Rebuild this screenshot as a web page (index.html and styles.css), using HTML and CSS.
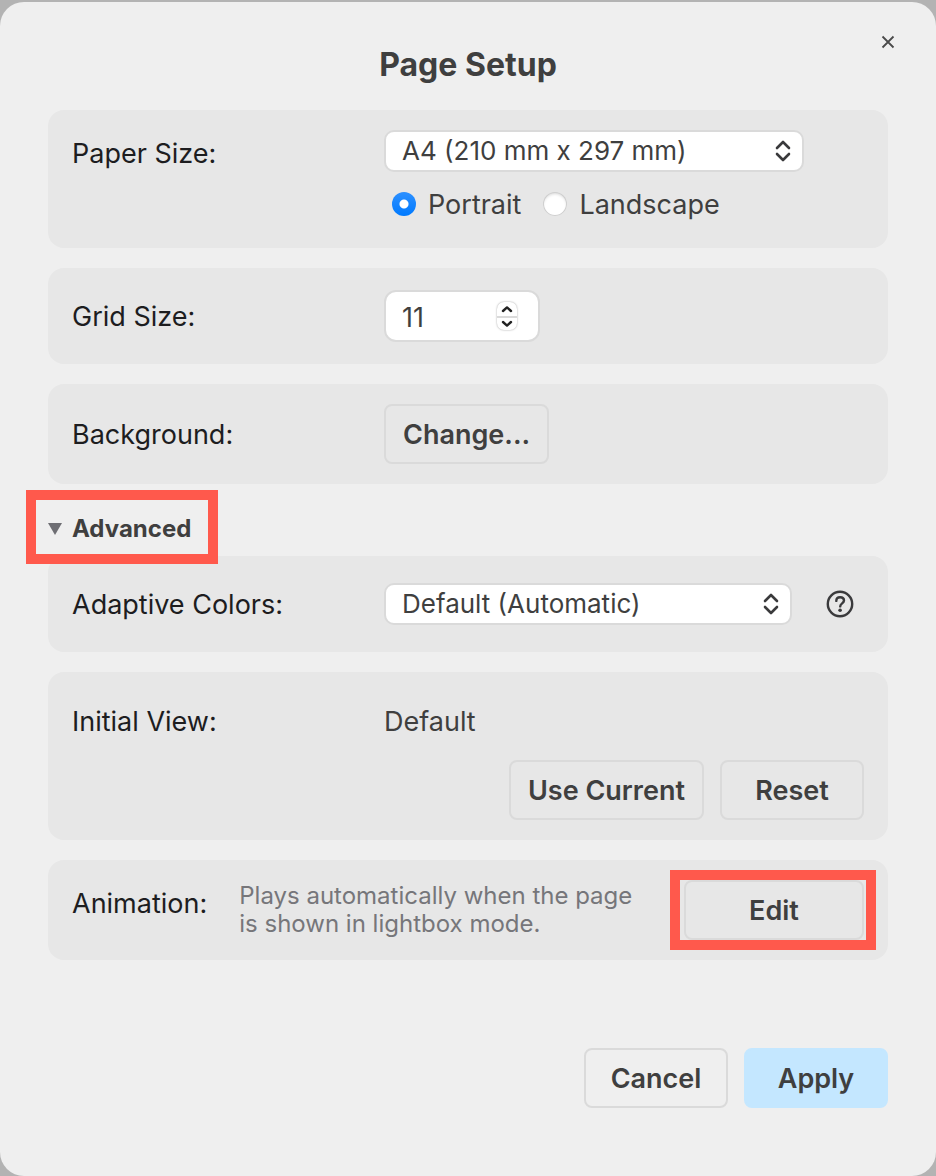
FILE: index.html
```html
<!DOCTYPE html>
<html lang="en">
<head>
    <meta charset="UTF-8">
    <meta name="viewport" content="width=device-width, initial-scale=1.0">
    <title>Page Setup</title>
    <link rel="stylesheet" href="styles.css">
</head>
<body>
    <form class="dialog" role="dialog" aria-labelledby="title">
        <button type="button" class="close" aria-label="Close">
            <svg width="14" height="14" viewBox="0 0 14 14"><path d="M1.5 1.5L12.5 12.5M12.5 1.5L1.5 12.5" stroke="#4a4a4a" stroke-width="1.8" fill="none"/></svg>
        </button>
        <h1 class="title" id="title">Page Setup</h1>

        <div class="panel panel-paper">
            <label class="label" for="paper">Paper Size:</label>
            <div>
                <div class="select-wrap select-paper">
                    <select id="paper" class="select">
                        <option>A4 (210 mm x 297 mm)</option>
                    </select>
                    <svg class="arrows" width="16" height="22" viewBox="0 0 16 22"><path d="M2 8L8 2L14 8M2 14L8 20L14 14"/></svg>
                </div>
                <div class="radios">
                    <input type="radio" class="radio" name="orientation" id="portrait" checked>
                    <label for="portrait">Portrait</label>
                    <input type="radio" class="radio" name="orientation" id="landscape">
                    <label for="landscape">Landscape</label>
                </div>
            </div>
        </div>

        <div class="panel panel-grid">
            <label class="label" for="grid">Grid Size:</label>
            <div class="number-wrap">
                <input type="number" class="number" id="grid" value="11">
                <div class="stepper">
                    <button type="button" class="step" aria-label="Increase">
                        <svg width="12" height="8" viewBox="0 0 12 8"><path d="M2 6L6 2.4L10 6"/></svg>
                    </button>
                    <button type="button" class="step" aria-label="Decrease">
                        <svg width="12" height="8" viewBox="0 0 12 8"><path d="M2 2L6 5.6L10 2"/></svg>
                    </button>
                </div>
            </div>
        </div>

        <div class="panel">
            <span class="label">Background:</span>
            <div><button type="button" class="btn btn-fit">Change...</button></div>
        </div>

        <details class="advanced" open>
            <summary class="summary">
                <span class="summary-text">
                    <svg width="14" height="12" viewBox="0 0 14 12"><path d="M0 0H14L7 12Z" fill="#6e6e73"/></svg>
                    Advanced
                </span>
            </summary>

            <div class="panel panel-colors">
                <label class="label" for="colors">Adaptive Colors:</label>
                <div class="colors">
                    <div class="select-wrap select-colors">
                        <select id="colors" class="select">
                            <option>Default (Automatic)</option>
                        </select>
                        <svg class="arrows" width="16" height="22" viewBox="0 0 16 22"><path d="M2 8L8 2L14 8M2 14L8 20L14 14"/></svg>
                    </div>
                    <button type="button" class="help" aria-label="Help">
                        <svg width="28" height="28" viewBox="0 0 28 28" fill="none" stroke="#3a3a3c" stroke-width="2.4">
                            <circle cx="14" cy="14" r="12.2"/>
                            <path d="M10.3 10.9C10.3 8.6 12 7.3 14.1 7.3C16.3 7.3 18 8.6 18 10.6C18 13.3 14.2 13.5 14.2 16.4" stroke-linecap="round"/>
                            <circle cx="14.1" cy="20.3" r="1.8" fill="#3a3a3c" stroke="none"/>
                        </svg>
                    </button>
                </div>
            </div>

            <div class="panel panel-view">
                <span class="label">Initial View:</span>
                <span class="value">Default</span>
                <div class="view-buttons">
                    <button type="button" class="btn btn-fit">Use Current</button>
                    <button type="button" class="btn">Reset</button>
                </div>
            </div>

            <div class="panel panel-animation">
                <span class="label">Animation:</span>
                <p class="note">Plays automatically when the page is shown in lightbox mode.</p>
                <div class="edit-wrap"><button type="button" class="btn btn-edit">Edit</button></div>
            </div>
        </details>

        <div class="footer">
            <button type="button" class="btn">Cancel</button>
            <button type="submit" class="btn btn-apply">Apply</button>
        </div>
    </form>
</body>
</html>
```

FILE: styles.css
```css
* {
    box-sizing: border-box;
}
body {
    margin: 0;
    padding-top: 2px;
    background: #b3b3b3;
    color: #3f3f3f;
    font-family: Inter, "Liberation Sans", sans-serif;
    font-size: 27px;
    line-height: 36px;
}
button, input, select {
    font: inherit;
    color: inherit;
    margin: 0;
}
button {
    padding: 0;
    border: none;
    background: none;
}
svg {
    display: block;
}
.dialog {
    position: relative;
    padding: 40px 48px 68px;
    background: #efefef;
    border-radius: 24px;
}
.close {
    position: absolute;
    top: 33px;
    right: 41px;
}
.title {
    margin: 0 0 22px;
    font-size: 32px;
    line-height: 46px;
    font-weight: 700;
    text-align: center;
}

/* panels */
.panel {
    display: grid;
    grid-template-columns: 312px 1fr;
    align-items: center;
    padding: 20px 24px;
    margin-bottom: 20px;
    background: #e7e7e7;
    border-radius: 16px;
}
.label {
    padding-top: 2px;
    color: #1d1d1f;
}
.panel-paper {
    align-items: start;
    padding-bottom: 24px;
}
.panel-paper .label {
    line-height: 44px;
}
.panel-grid {
    padding: 22px 24px;
}
.panel:has(+ .advanced) {
    margin-bottom: 0;
}

/* form controls */
.select-wrap {
    position: relative;
}
.select-paper {
    max-width: 420px;
}
.select-colors {
    flex: 0 1 408px;
}
.select {
    display: block;
    width: 100%;
    height: 42px;
    padding: 0 40px 0 16px;
    appearance: none;
    background: #fff;
    border: 2px solid #dadada;
    border-radius: 10px;
    font-size: 26px;
}
.arrows {
    position: absolute;
    top: 10px;
    right: 13px;
    pointer-events: none;
    fill: none;
    stroke: #3a3a3c;
    stroke-width: 2.6;
    stroke-linecap: round;
    stroke-linejoin: round;
}
.radios {
    display: flex;
    align-items: center;
    height: 40px;
    margin-top: 12px;
    padding-left: 8px;
}
.radios label {
    margin: 0 22px 0 12px;
    padding-top: 2px;
}
.radio {
    width: 24px;
    height: 24px;
    appearance: none;
    border-radius: 50%;
    background: #fff;
    box-shadow: inset 0 0 0 1px #cfcfcf, inset 0 2px 3px #d9d9d9;
}
.radio:checked {
    background: radial-gradient(circle, #fff 4px, transparent 5px), linear-gradient(#2d90ff, #007aff);
    box-shadow: none;
}
.number-wrap {
    position: relative;
    width: 156px;
}
.number {
    display: block;
    width: 100%;
    height: 52px;
    padding: 2px 50px 0 16px;
    appearance: textfield;
    background: #fff;
    border: 2px solid #dadada;
    border-radius: 12px;
}
.number::-webkit-inner-spin-button {
    display: none;
}
.stepper {
    position: absolute;
    top: 12px;
    right: 23px;
    width: 20px;
    height: 28px;
    border-radius: 7px;
    background: #fff;
    box-shadow: 0 0 2px #9e9e9e;
}
.step {
    display: flex;
    align-items: center;
    justify-content: center;
    width: 100%;
    height: 14px;
}
.step + .step {
    border-top: 2px solid #dadada;
}
.step svg {
    fill: none;
    stroke: #222;
    stroke-width: 2.4;
    stroke-linecap: round;
    stroke-linejoin: round;
}
.btn {
    min-width: 144px;
    height: 60px;
    padding-top: 2px;
    border: 2px solid #dadada;
    border-radius: 8px;
    font-weight: 600;
}
.btn-fit {
    padding: 2px 17px 0;
}

/* advanced section */
.summary {
    display: flex;
    padding-top: 6px;
    height: 72px;
    list-style: none;
}
.summary-text {
    position: relative;
    display: flex;
    align-items: center;
    gap: 10px;
    height: 74px;
    padding-top: 4px;
    font-size: 24px;
    font-weight: 700;
}
.summary-text::after {
    content: "";
    position: absolute;
    inset: 0 -27px 0 -22px;
    border: 10px solid #ff594c;
}
.panel-colors {
    min-height: 96px;
}
.colors {
    display: flex;
    align-items: center;
    justify-content: space-between;
    padding-right: 10px;
}
.panel-view {
    grid-template-rows: 60px 60px;
    row-gap: 8px;
}
.panel-view .label {
    padding-top: 0;
}
.view-buttons {
    grid-column: 1 / -1;
    display: flex;
    justify-content: flex-end;
    gap: 16px;
}
.panel-animation {
    grid-template-columns: auto 1fr 180px;
    margin-bottom: 0;
}
.panel-animation .label {
    align-self: start;
    line-height: 44px;
}
.note {
    margin: 0;
    padding: 0 32px;
    color: #76767a;
    font-size: 24px;
    line-height: 28px;
}
.edit-wrap {
    position: relative;
}
.btn-edit {
    display: block;
    width: 100%;
}
.edit-wrap::after {
    content: "";
    position: absolute;
    inset: -10px -12px -10px -14px;
    border: 10px solid #ff594c;
    pointer-events: none;
}

.footer {
    display: flex;
    justify-content: flex-end;
    gap: 16px;
    margin-top: 88px;
}
.btn-apply {
    border-color: #c4e7ff;
    background: #c4e7ff;
}
```
